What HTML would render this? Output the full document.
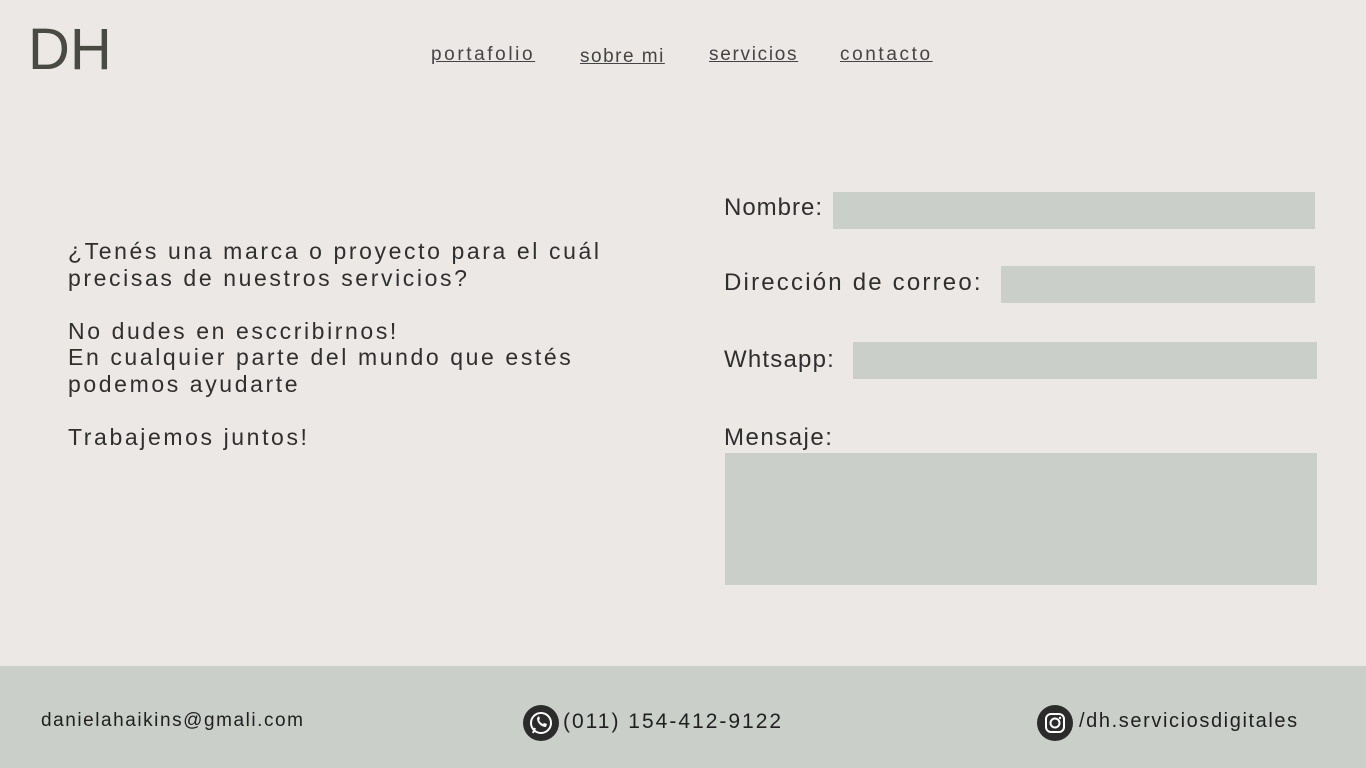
<!DOCTYPE html>
<html><head><meta charset="utf-8"><style>
body{margin:0;width:1366px;height:768px;background:#ece8e5;font-family:"Liberation Sans",sans-serif;color:#2f2f2f;position:relative;overflow:hidden}
.a{position:absolute;white-space:nowrap}
.logo{left:28px;top:18px;font-size:58px;color:#4a4a45;letter-spacing:0px;font-weight:300;line-height:64px}
.nav{top:44px;font-size:19px;letter-spacing:2.6px;text-decoration:underline;color:#444}
.txt{left:68px;top:238px;font-size:23px;letter-spacing:2.6px;line-height:26.5px;white-space:pre;color:#2f2f2f}
.lab{font-size:24px;letter-spacing:2.2px;color:#2f2f2f}
.box{position:absolute;background:#cbcfc9}
.foot{position:absolute;left:0;top:666px;width:1366px;height:102px;background:#cbcfc9}
.ft{font-size:19px;letter-spacing:1.55px;color:#1f1f1f}
.ic{position:absolute;width:36px;height:36px;border-radius:50%;background:#2b2b2b}
</style></head><body>
<div class="a logo">DH</div>
<div class="a nav" style="left:431px">portafolio</div>
<div class="a nav" style="left:580px;top:46px;letter-spacing:1.5px">sobre mi</div>
<div class="a nav" style="left:709px;letter-spacing:1.7px">servicios</div>
<div class="a nav" style="left:840px">contacto</div>
<div class="a txt">¿Tenés una marca o proyecto para el cuál
precisas de nuestros servicios?

No dudes en esccribirnos!
En cualquier parte del mundo que estés
podemos ayudarte

Trabajemos juntos!</div>
<div class="a lab" style="left:724px;top:194px;letter-spacing:1px">Nombre:</div>
<div class="box" style="left:833px;top:192px;width:482px;height:37px"></div>
<div class="a lab" style="left:724px;top:269px">Dirección de correo:</div>
<div class="box" style="left:1001px;top:266px;width:314px;height:37px"></div>
<div class="a lab" style="left:724px;top:346px;letter-spacing:1.2px">Whtsapp:</div>
<div class="box" style="left:853px;top:342px;width:464px;height:37px"></div>
<div class="a lab" style="left:724px;top:424px;letter-spacing:1.5px">Mensaje:</div>
<div class="box" style="left:725px;top:453px;width:592px;height:132px"></div>
<div class="foot"></div>
<div class="a ft" style="left:41px;top:710px">danielahaikins@gmali.com</div>
<div class="ic" style="left:523px;top:705px"><svg width="36" height="36" viewBox="0 0 36 36"><circle cx="18" cy="18" r="10" fill="none" stroke="#fff" stroke-width="2"/><path d="M10 28l2-5" stroke="#fff" stroke-width="2"/><path d="M14 13c0 5 4 9 9 9l1-3-3-1-1 1c-2-1-3-2-4-4l1-1-1-3z" fill="#fff"/></svg></div>
<div class="a ft" style="left:563px;top:710px;font-size:21px;letter-spacing:2px">(011) 154-412-9122</div>
<div class="ic" style="left:1037px;top:705px"><svg width="36" height="36" viewBox="0 0 36 36"><rect x="9" y="9" width="18" height="18" rx="5" fill="none" stroke="#fff" stroke-width="2"/><circle cx="18" cy="18" r="4.5" fill="none" stroke="#fff" stroke-width="2"/><circle cx="23" cy="13" r="1.2" fill="#fff"/></svg></div>
<div class="a ft" style="left:1079px;top:710px;font-size:20px;letter-spacing:1.6px">/dh.serviciosdigitales</div>
</body></html>
